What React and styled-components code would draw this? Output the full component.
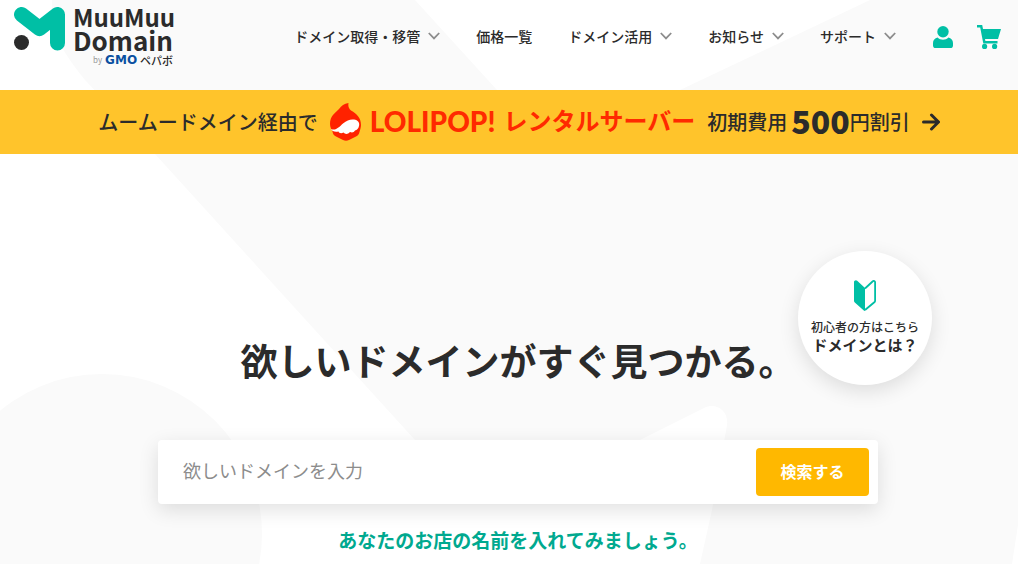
import React from "react";
import styled, { createGlobalStyle } from "styled-components";

const NAV = [
  { label: "ドメイン取得・移管", menu: true },
  { label: "価格一覧", menu: false },
  { label: "ドメイン活用", menu: true },
  { label: "お知らせ", menu: true },
  { label: "サポート", menu: true },
];

const Chevron = () => (
  <svg width="12" height="8" viewBox="0 0 12 8" fill="none" aria-hidden="true">
    <path d="M0.8 1L6 6.4L11.2 1" stroke="#8c8c8c" strokeWidth="1.8" />
  </svg>
);

const LogoMark = () => (
  <svg width="51" height="44" viewBox="0 0 51 44" aria-hidden="true">
    <path
      d="M7.5 7.5L25.5 21.5L43.5 7.5V36"
      fill="none"
      stroke="#00bfa5"
      strokeWidth="15"
      strokeLinecap="round"
      strokeLinejoin="round"
    />
    <circle cx="7.5" cy="35.5" r="7.5" fill="#2b2b2b" />
  </svg>
);

const UserIcon = () => (
  <svg width="20" height="22" viewBox="0 0 20 22" fill="#00bfa5" aria-hidden="true">
    <circle cx="10" cy="5.7" r="5.7" />
    <path d="M4.6 11.6C6 13 8 13.8 10 13.8S14 13 15.4 11.6C18.2 12.2 20 14.2 20 17V19.4C20 21 19 22 17.4 22H2.6C1 22 0 21 0 19.4V17C0 14.2 1.8 12.2 4.6 11.6Z" />
  </svg>
);

const CartIcon = () => (
  <svg width="24" height="24" viewBox="0 0 24 24" fill="#00bfa5" aria-hidden="true">
    <path d="M0 0H5.2L6 4H24L21 14H8L8.4 16H20.5V18.4H6.3L3.2 2.6H0Z" />
    <circle cx="7.6" cy="21.4" r="2.6" />
    <circle cx="17.6" cy="21.4" r="2.6" />
  </svg>
);

const LolipopIcon = () => (
  <svg width="32" height="38" viewBox="0 0 32 38" aria-hidden="true">
    <path
      d="M18.5 0C18 3 18.5 5 21 7.5C27 11 31 15 31 22C31 24.5 30 27 29.5 29C29 31.5 28 32.5 26 33.5L19 37Q16 38.5 13 37L6 33.500C3.5 32 3 31 2.5 28.5C1.5 26.5 0 24 0 21C0 13 5 10 9 6C11.5 3 14 0.5 18.5 0Z"
      fill="#ff2200"
    />
    <path
      d="M1 26C6 28 9 24 13 20.5C17 17.5 20 16 24 16.5C28 17 30 20 29 23C28.5 25.5 27 27 25 27.5C24 29.5 22 30 20 29C18 31.5 15 31.5 13.5 29.5C11 31 9 30 8.5 28.5C5 29 2 28.5 1 26Z"
      fill="#fff"
    />
  </svg>
);

const ArrowIcon = () => (
  <svg width="18" height="18" viewBox="0 0 18 18" fill="none" aria-hidden="true">
    <path
      d="M1.5 9H16M9.5 2L16.5 9L9.5 16"
      stroke="#2b2b2b"
      strokeWidth="3"
      strokeLinecap="round"
      strokeLinejoin="round"
    />
  </svg>
);

const BeginnerIcon = () => (
  <svg width="22" height="31" viewBox="0 0 22 31" aria-hidden="true">
    <path
      d="M0 2C0 0.5 2 -0.5 3.2 0.7L11 8V31C10.5 31 10 30.6 9.5 30.2L0.8 22.5Q0 21.8 0 20.8Z"
      fill="#00bfa5"
    />
    <path
      d="M11 8.5L18.8 1.3C19.8 0.5 21.1 1 21.1 2.2V20.8Q21.1 21.5 20.6 22L11 30"
      fill="none"
      stroke="#00bfa5"
      strokeWidth="1.8"
    />
  </svg>
);

export default function App() {
  return (
    <Page>
      <GlobalStyle />
      <Backdrop viewBox="0 0 1018 564" preserveAspectRatio="xMidYMin slice" aria-hidden="true">
        <path
          d="M52 0C51 36 63 52 85 80L155 154L415 440Q510 535 640 440L704 408C716 402 729 411 727 425L712 510L700 564H1012L1018 525V0H870L680 90Q570 160 497 90L415 0Z"
          fill="#fafafa"
        />
        <circle cx="102" cy="534" r="160" fill="#fafafa" />
      </Backdrop>

      <Header>
        <Logo href="#">
          <LogoMark />
          <LogoText>
            <LogoName>MuuMuu</LogoName>
            <LogoName $large>Domain</LogoName>
            <LogoBy>
              <small>by</small>
              <b>GMO</b>
              <span>ペパボ</span>
            </LogoBy>
          </LogoText>
        </Logo>
        <Nav>
          {NAV.map(({ label, menu }) => (
            <NavLink href="#" key={label}>
              {label}
              {menu && <Chevron />}
            </NavLink>
          ))}
        </Nav>
        <Tools>
          <a href="#" aria-label="ログイン">
            <UserIcon />
          </a>
          <a href="#" aria-label="カート">
            <CartIcon />
          </a>
        </Tools>
      </Header>

      <Banner href="#">
        <BannerText>ムームードメイン経由で</BannerText>
        <Brand>
          <LolipopIcon />
          <BrandName>LOLIPOP!</BrandName>
          <BrandKana>レンタルサーバー</BrandKana>
        </Brand>
        <Offer>
          <BannerText>初期費用</BannerText>
          <Amount>500</Amount>
          <BannerText>円割引</BannerText>
        </Offer>
        <ArrowIcon />
      </Banner>

      <Hero>
        <Beginner href="#">
          <BeginnerIcon />
          <span>初心者の方はこちら</span>
          <strong>ドメインとは？</strong>
        </Beginner>
        <Title>欲しいドメインがすぐ見つかる。</Title>
        <Search onSubmit={(e) => e.preventDefault()}>
          <SearchInput type="text" aria-label="ドメイン" placeholder="欲しいドメインを入力" />
          <SearchButton type="submit">検索する</SearchButton>
        </Search>
        <Hint>あなたのお店の名前を入れてみましょう。</Hint>
      </Hero>
    </Page>
  );
}

const GlobalStyle = createGlobalStyle`
  * {
    box-sizing: border-box;
  }
  body {
    margin: 0;
    background: #fff;
    color: #2b2b2b;
    font-family: "Noto Sans CJK JP", sans-serif;
  }
  a {
    color: inherit;
    text-decoration: none;
  }
  svg {
    display: block;
    flex-shrink: 0;
  }
`;

const Page = styled.div`
  position: relative;
  min-height: 100vh;
  overflow: hidden;
`;

const Backdrop = styled.svg`
  position: absolute;
  inset: 0;
  z-index: -1;
  width: 100%;
  height: 100%;
`;

const Header = styled.header`
  display: flex;
  align-items: flex-start;
  height: 90px;
  padding: 5px 17px 0 14px;
`;

const Logo = styled.a`
  display: flex;
  gap: 8px;
  > svg {
    margin-top: 2px;
  }
`;

const LogoText = styled.div`
  display: flex;
  flex-direction: column;
`;

const LogoName = styled.span`
  font-size: ${({ $large }) => ($large ? "26px" : "24px")};
  font-weight: 700;
  line-height: 23px;
`;

const LogoBy = styled.span`
  display: flex;
  align-items: center;
  justify-content: flex-end;
  gap: 3px;
  padding-right: 2px;
  margin-top: 2px;
  font-size: 11px;
  line-height: 14px;
  small {
    color: #999;
    font-size: 8px;
  }
  b {
    color: #0a50a1;
    font-family: "DejaVu Sans", sans-serif;
    font-size: 12px;
  }
  span {
    font-weight: 500;
  }
`;

const Nav = styled.nav`
  display: flex;
  gap: 36px;
  margin-left: auto;
  padding-top: 21px;
`;

const NavLink = styled.a`
  display: flex;
  align-items: center;
  gap: 8px;
  font-size: 14px;
  font-weight: 500;
  line-height: 20px;
  white-space: nowrap;
`;

const Tools = styled.div`
  display: flex;
  align-items: center;
  gap: 24px;
  margin-left: 37px;
  padding-top: 20px;
`;

const Banner = styled.a`
  display: flex;
  align-items: center;
  justify-content: center;
  gap: 12px;
  height: 64px;
  padding-left: 20px;
  background: #ffc42b;
  white-space: nowrap;
`;

const BannerText = styled.span`
  font-size: 20px;
  font-weight: 500;
  line-height: 32px;
`;

const Brand = styled.span`
  display: flex;
  align-items: center;
  gap: 8px;
  color: #ff2a00;
`;

const BrandName = styled.span`
  margin-bottom: 2px;
  font-family: Lato, sans-serif;
  font-size: 28px;
  font-weight: 900;
  line-height: 32px;
`;

const BrandKana = styled.span`
  margin-bottom: 4px;
  font-size: 24px;
  font-weight: 700;
  line-height: 32px;
`;

const Offer = styled.span`
  display: flex;
  align-items: flex-start;
`;

const Amount = styled.strong`
  margin-left: 4px;
  font-size: 32px;
  font-weight: 900;
  line-height: 28px;
`;

const Hero = styled.main`
  position: relative;
  display: flex;
  flex-direction: column;
  align-items: center;
  padding: 178px 0 0 18px;
`;

const Beginner = styled.a`
  position: absolute;
  top: 97px;
  right: 86px;
  display: flex;
  flex-direction: column;
  align-items: center;
  width: 134px;
  height: 134px;
  padding-top: 29px;
  border-radius: 50%;
  background: #fff;
  box-shadow: 0 6px 20px rgba(0, 0, 0, 0.12);
  white-space: nowrap;
  span {
    margin-top: 7px;
    font-size: 12px;
    font-weight: 500;
    line-height: 18px;
  }
  strong {
    font-size: 15px;
    line-height: 18px;
  }
`;

const Title = styled.h1`
  margin: 0;
  font-size: 37px;
  font-weight: 700;
  line-height: 56px;
`;

const Search = styled.form`
  display: flex;
  width: 100%;
  max-width: 720px;
  height: 64px;
  margin-top: 52px;
  padding: 8px 9px 8px 25px;
  border-radius: 4px;
  background: #fff;
  box-shadow: 0 6px 20px rgba(0, 0, 0, 0.12);
`;

const SearchInput = styled.input`
  flex: 1;
  min-width: 0;
  padding: 0 0 4px;
  border: 0;
  outline: 0;
  background: none;
  color: #2b2b2b;
  font-family: inherit;
  font-size: 18px;
  &::placeholder {
    color: #8c8c8c;
  }
`;

const SearchButton = styled.button`
  width: 113px;
  padding-bottom: 4px;
  border: 0;
  border-radius: 4px;
  background: #ffb800;
  color: #fff;
  font-family: inherit;
  font-size: 16px;
  font-weight: 700;
`;

const Hint = styled.p`
  margin: 22px 0 0;
  color: #00a98f;
  font-size: 19px;
  font-weight: 700;
  line-height: 28px;
`;
